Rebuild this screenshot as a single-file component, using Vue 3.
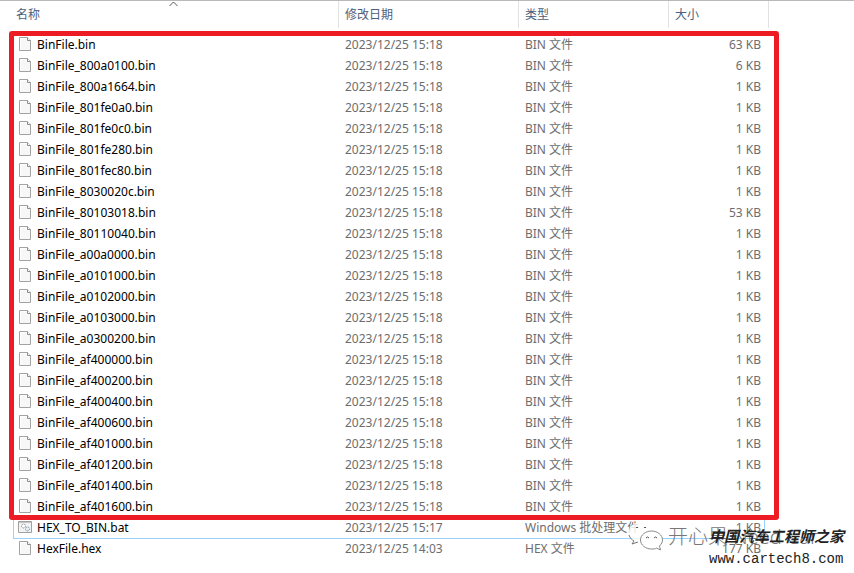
<script setup>
const names = [
  'BinFile.bin', 'BinFile_800a0100.bin', 'BinFile_800a1664.bin', 'BinFile_801fe0a0.bin',
  'BinFile_801fe0c0.bin', 'BinFile_801fe280.bin', 'BinFile_801fec80.bin', 'BinFile_8030020c.bin',
  'BinFile_80103018.bin', 'BinFile_80110040.bin', 'BinFile_a00a0000.bin', 'BinFile_a0101000.bin',
  'BinFile_a0102000.bin', 'BinFile_a0103000.bin', 'BinFile_a0300200.bin', 'BinFile_af400000.bin',
  'BinFile_af400200.bin', 'BinFile_af400400.bin', 'BinFile_af400600.bin', 'BinFile_af401000.bin',
  'BinFile_af401200.bin', 'BinFile_af401400.bin', 'BinFile_af401600.bin',
];
const sizes = { 'BinFile.bin': 63, 'BinFile_800a0100.bin': 6, 'BinFile_80103018.bin': 53 };

const files = names.map((name) => ({
  name,
  date: '2023/12/25 15:18',
  type: 'BIN 文件',
  size: sizes[name] || 1,
}));
files.push({ name: 'HEX_TO_BIN.bat', date: '2023/12/25 15:17', type: 'Windows 批处理文件', size: 1, bat: true });
files.push({ name: 'HexFile.hex', date: '2023/12/25 14:03', type: 'HEX 文件', size: 177 });
</script>

<template>
  <main class="explorer">
    <table class="file-table">
      <colgroup>
        <col class="col-name" />
        <col class="col-date" />
        <col class="col-type" />
        <col class="col-size" />
        <col />
      </colgroup>
      <thead>
        <tr>
          <th>
            名称
            <svg class="sort" width="9" height="6" viewBox="0 0 9 6"><path d="M.5 5l4-4 4 4" fill="none" stroke="#555" /></svg>
          </th>
          <th>修改日期</th>
          <th>类型</th>
          <th>大小</th>
          <th class="rest"></th>
        </tr>
      </thead>
      <tbody>
        <tr v-for="file in files" :key="file.name" :class="{ focused: file.bat }">
          <td class="name">
            <div class="name-row">
              <svg v-if="file.bat" class="icon" width="16" height="16" viewBox="0 0 16 16">
                <path d="M1.5 2.5h13v11h-13z" fill="#f3f3f3" stroke="#a0a0a0" />
                <path d="M2 3.5h12" stroke="#c4c4c4" />
                <circle cx="6.5" cy="7" r="2" fill="#fff" stroke="#8f989e" stroke-dasharray="1.6 .6" />
                <circle cx="10.5" cy="10" r="2" fill="#e2f1fa" stroke="#7f9cac" stroke-dasharray="1.6 .6" />
              </svg>
              <svg v-else class="icon" width="16" height="16" viewBox="0 0 16 16">
                <path d="M2.5 1.5h8l3 3v10h-11z" fill="#f7f7f7" stroke="#a3a3a3" />
                <path d="M3.5 13.5v-11h6.5" fill="none" stroke="#fff" />
                <path d="M10.5 1.5v3h3" fill="#fff" stroke="#8d8d8d" />
              </svg>
              <span>{{ file.name }}</span>
            </div>
          </td>
          <td>{{ file.date }}</td>
          <td>{{ file.type }}</td>
          <td class="size">{{ file.size }} KB</td>
          <td></td>
        </tr>
      </tbody>
    </table>

    <div class="marker"></div>

    <div class="wechat">
      <svg width="36" height="32" viewBox="0 0 36 32">
        <path d="M13 1c-7 0-12 4-12 10 0 4 2 7 5 8l-2 4 5-3c9 2 16-2 16-9 0-6-5-10-12-10z" fill="#fff" fill-opacity=".8" />
        <path d="M1 14c1 3 3 5 5 6l-2 3 6-2" fill="none" stroke="#777" />
        <path d="M8 7q1-2 2 0M16 7q1-2 2 0" fill="none" stroke="#555" />
        <path d="M23.5 10c-6 0-11 4-11 9s5 9 11 9c2 0 4 0 5-1l4 2-1-4c2-2 3-4 3-6 0-5-5-9-11-9z" fill="#fff" stroke="#888" />
        <path d="M18 17q1.5-2 3 0M26 17q1.5-2 3 0" fill="none" stroke="#555" />
      </svg>
      <span>开心果 Need Car</span>
    </div>
    <div class="site">
      <strong>中国汽车工程师之家</strong>
      <span>www.cartech8.com</span>
    </div>
  </main>
</template>

<style>
body { margin: 0; background: #fff; }
</style>

<style scoped>
.explorer {
  position: relative;
  border-top: 1px solid #b9b9b9;
  padding-bottom: 14px;
  overflow: hidden;
  font: 12px/20px "Noto Sans", "Noto Sans CJK SC", sans-serif;
  color: #6d6d6d;
}
.file-table { width: 100%; table-layout: fixed; border-collapse: separate; border-spacing: 0; }
.col-name { width: 339px; }
.col-date { width: 180px; }
.col-type { width: 150px; }
.col-size { width: 100px; }
th {
  position: relative;
  height: 27px;
  padding: 0 0 0 6px;
  border-right: 1px solid #e2e2e2;
  font-weight: 400;
  text-align: left;
  color: #4c607a;
}
th:first-child { padding-left: 16px; }
th.rest { border: 0; }
.sort { position: absolute; left: 50%; top: 0; }
thead::after { content: ""; display: block; height: 6px; }
td { height: 21px; padding: 0 0 0 6px; white-space: nowrap; line-height: 20px; box-sizing: border-box; }
td.name { padding-left: 17px; color: #000; }
.name-row { display: flex; align-items: center; gap: 4px; }
.icon { margin-bottom: 2px; }
td.size { padding: 0 8px 0 0; text-align: right; }
.focused { position: relative; }
/* focus frame around the selected columns */
.focused td:first-child::before {
  content: "";
  position: absolute;
  left: 13px;
  top: 0;
  width: 750px;
  height: 20px;
  border: 1px solid #99d1ff;
}
.marker {
  position: absolute;
  left: 9px;
  top: 30px;
  width: 760px;
  height: 479px;
  border: 5px solid #ed1c24;
  border-radius: 3px;
}
.wechat {
  position: absolute;
  right: 36px;
  bottom: 20px;
  display: flex;
  align-items: center;
  gap: 4px;
  font-size: 20px;
  font-weight: 300;
  line-height: 32px;
  color: #777;
  white-space: nowrap;
}
.site {
  position: absolute;
  right: 10px;
  bottom: 4px;
  display: flex;
  flex-direction: column;
  font-family: "Liberation Mono", "Noto Sans CJK SC", monospace;
  color: #222;
}
.site strong { font-size: 15px; font-style: italic; line-height: 20px; }
.site span { font-size: 14px; line-height: 20px; }
</style>
